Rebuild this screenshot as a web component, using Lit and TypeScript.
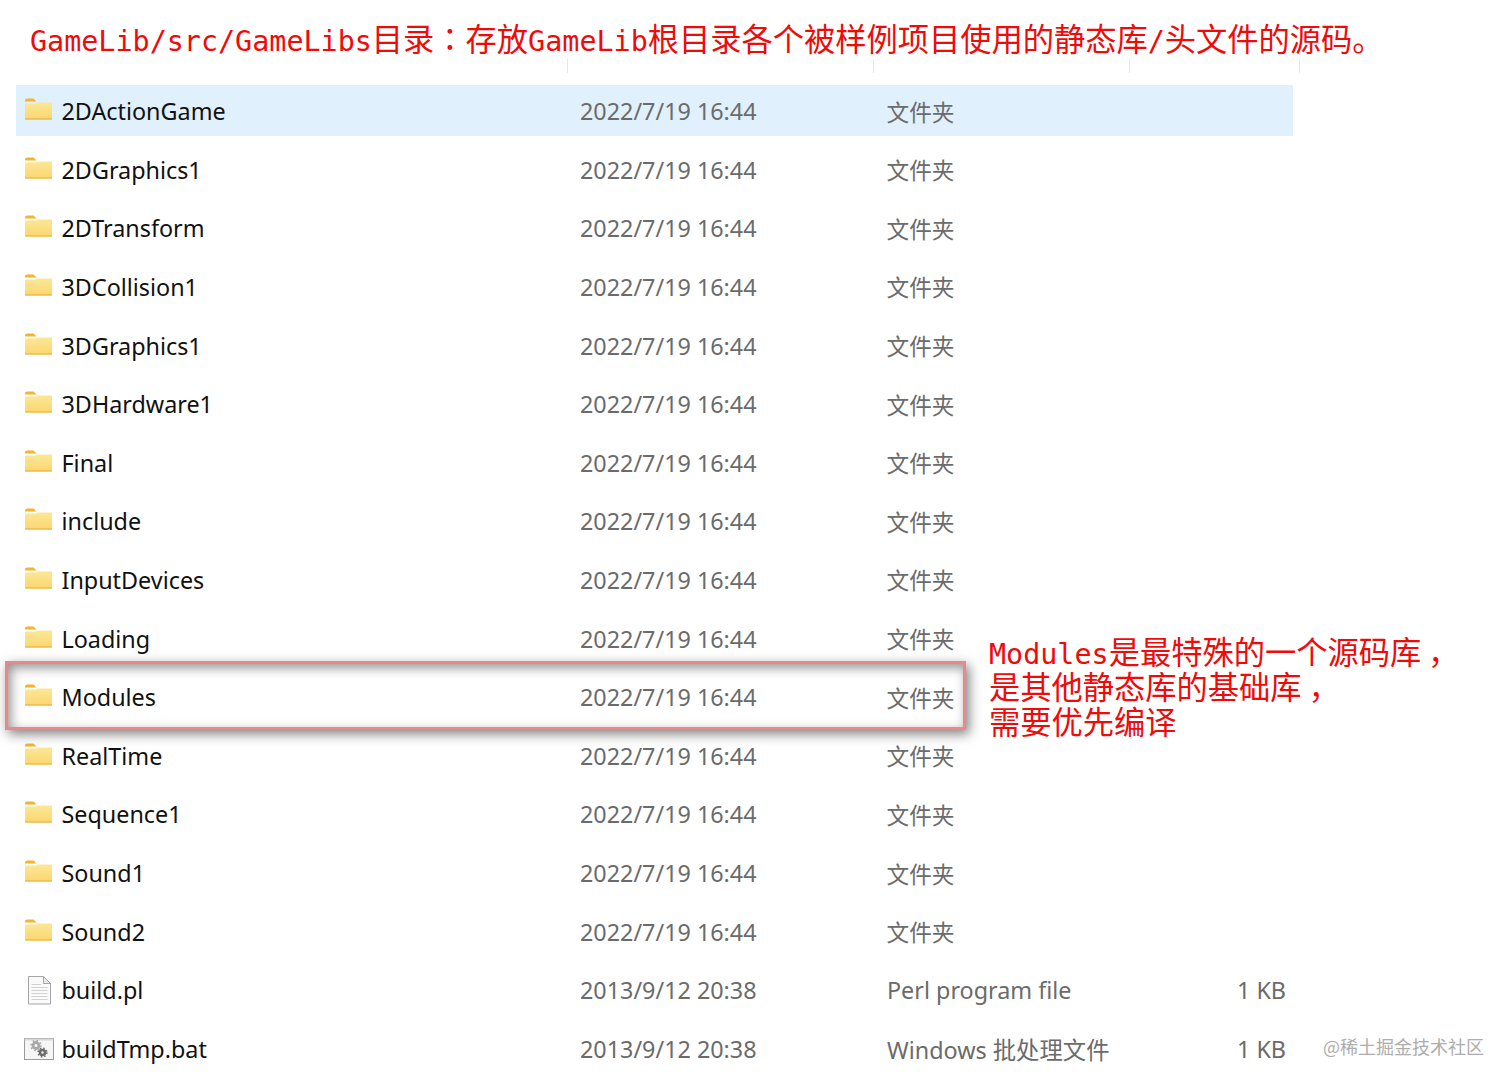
import { LitElement, html, css, svg } from "lit";
import { customElement } from "lit/decorators.js";

type Row = { name: string; date: string; type: string; size?: string; icon: "folder" | "file" | "bat"; sel?: boolean };

const D = "2022/7/19 16:44";
const T = "文件夹";
const folders = ["2DActionGame","2DGraphics1","2DTransform","3DCollision1","3DGraphics1","3DHardware1","Final","include","InputDevices","Loading","Modules","RealTime","Sequence1","Sound1","Sound2"];
const rows: Row[] = [
  ...folders.map((name, i): Row => ({ name, date: D, type: T, icon: "folder", sel: i === 0 })),
  { name: "build.pl", date: "2013/9/12 20:38", type: "Perl program file", size: "1 KB", icon: "file" },
  { name: "buildTmp.bat", date: "2013/9/12 20:38", type: "Windows 批处理文件", size: "1 KB", icon: "bat" },
];

const folderIcon = svg`<svg width="30" height="24" viewBox="0 3 30 24" style="overflow:visible">
  <defs><linearGradient id="fg" x1="0" y1="0" x2="0" y2="1"><stop offset="0" stop-color="#fce797"/><stop offset="1" stop-color="#fbd66f"/></linearGradient></defs>
  <path d="M2 4.5Q2 2.5 4 2.5H10.5L13.5 5.5H2Z" fill="#f6b42a"/>
  <path d="M2 7.5H12.5L14.5 6.5H29V22.5Q29 23.5 28 23.5H3Q2 23.5 2 22.5Z" fill="url(#fg)"/>
  <path d="M2 23H29" stroke="#e5ad3a" stroke-width="1"/>
</svg>`;

const fileIcon = svg`<svg width="30" height="32" viewBox="0 0 30 32">
  <path d="M5.5 2.5H20.5L27.5 9.5V30H5.5Z" fill="#fafafa" stroke="#a5a5a5"/>
  <path d="M20.5 2.5V9.5H27.5Z" fill="#e8e8e8" stroke="#a5a5a5"/>
  <path d="M8.5 10.5H18M8.5 13.5H24.5M8.5 16.5H24.5M8.5 19.5H24.5M8.5 22.5H24.5M8.5 25.5H24.5" stroke="#d2d2d2"/>
</svg>`;

const batIcon = svg`<svg width="32" height="24" viewBox="0 0 32 24">
  <rect x="1.5" y="1.5" width="29" height="21" fill="#f6f6f6" stroke="#9a9a9a"/>
  <path d="M1.5 2.5H30.5" stroke="#d8d8d8" stroke-width="2"/>
  <circle cx="13" cy="8.5" r="3" fill="none" stroke="#a8a8a8" stroke-width="2.8"/>
  <circle cx="13" cy="8.5" r="5" fill="none" stroke="#a8a8a8" stroke-width="1.6" stroke-dasharray="1.6 2.3"/>
  <circle cx="19.5" cy="15.5" r="2.5" fill="none" stroke="#6c6c6c" stroke-width="2.6"/>
  <circle cx="19.5" cy="15.5" r="4.4" fill="none" stroke="#6c6c6c" stroke-width="1.5" stroke-dasharray="1.5 2"/>
</svg>`;

const icons = { folder: folderIcon, file: fileIcon, bat: batIcon };

@customElement("app-root")
export class AppRoot extends LitElement {
  static styles = css`
    :host { display: block; position: relative; width: 1512px; height: 1086px; background: #fff; overflow: hidden; font-family: "Noto Sans", "Noto Sans CJK SC", sans-serif; }
    .title { margin: 0; padding: 17px 0 0 30px; height: 42px; font: 400 31.25px/42px "Noto Sans CJK SC", sans-serif; color: #f00a0a; white-space: nowrap; }
    .m { font-family: "DejaVu Sans Mono", monospace; font-size: 28.4px; line-height: 0; }
    .colon { font-family: "Noto Sans CJK TC", sans-serif; }
    .p { margin-left: .22em; margin-right: -.22em; }
    .head { height: 26.6px; display: grid; grid-template-columns: 568px 306px 256px 170px; }
    .head span { height: 14px; border-right: 1px solid #e6e6e6; }
    .list { display: flex; flex-direction: column; padding-left: 16px; width: 1277px; }
    .row { position: relative; display: grid; grid-template-columns: 564px 307px 1fr 56px; align-items: center; font-size: 23.35px; padding-bottom: 7.62px; box-sizing: border-box; height: 58.62px; }
    .row .bg { position: absolute; left: 0; right: 0; top: -.6px; height: 51px; }
    .row.sel .bg { background: #e1f0fd; }
    .name { position: relative; display: flex; align-items: center; color: #111; padding-left: 7px; white-space: nowrap; }
    .ic { width: 38.5px; display: flex; flex: none; }
    .date, .type, .size { position: relative; color: #6b6b6b; white-space: nowrap; }
    .cjk { font: 400 22.7px "Noto Sans CJK SC", sans-serif; margin-left: -.5px; }
    .mark { position: absolute; left: 4.5px; top: 661px; width: 961px; height: 69px; box-sizing: border-box; border: 3.5px solid #f18484; box-shadow: 3px 4px 11px rgba(60,60,60,.65), inset 3px 4px 11px rgba(60,60,60,.55); }
    .note { position: absolute; left: 989px; top: 633px; margin: 0; font: 400 31.25px/35px "Noto Sans CJK SC", sans-serif; color: #f00a0a; white-space: nowrap; }
    .wm { position: absolute; left: 1323px; top: 1034px; font: 400 18px/24px "Noto Sans CJK SC", sans-serif; color: #adadad; white-space: nowrap; }
  `;

  render() {
    return html`
      <h1 class="title"><span class="m">GameLib/src/GameLibs</span>目录<span class="colon">：</span>存放<span class="m">GameLib</span>根目录各个被样例项目使用的静态库<span class="m">/</span>头文件的源码。</h1>
      <div class="head"><span></span><span></span><span></span><span></span></div>
      <div class="list">
        ${rows.map((r) => html`
          <div class="row ${r.sel ? "sel" : ""}">
            <div class="bg"></div>
            <div class="name"><span class="ic">${icons[r.icon]}</span>${r.name}</div>
            <div class="date">${r.date}</div>
            <div class="type">${r.type === T ? html`<span class="cjk">${T}</span>` : r.type}</div>
            <div class="size">${r.size ?? ""}</div>
          </div>`)}
      </div>
      <div class="mark"></div>
      <p class="note"><span class="m">Modules</span>是最特殊的一个源码库<span class="p">，</span><br />是其他静态库的基础库<span class="p">，</span><br />需要优先编译</p>
      <div class="wm">@稀土掘金技术社区</div>
    `;
  }
}
